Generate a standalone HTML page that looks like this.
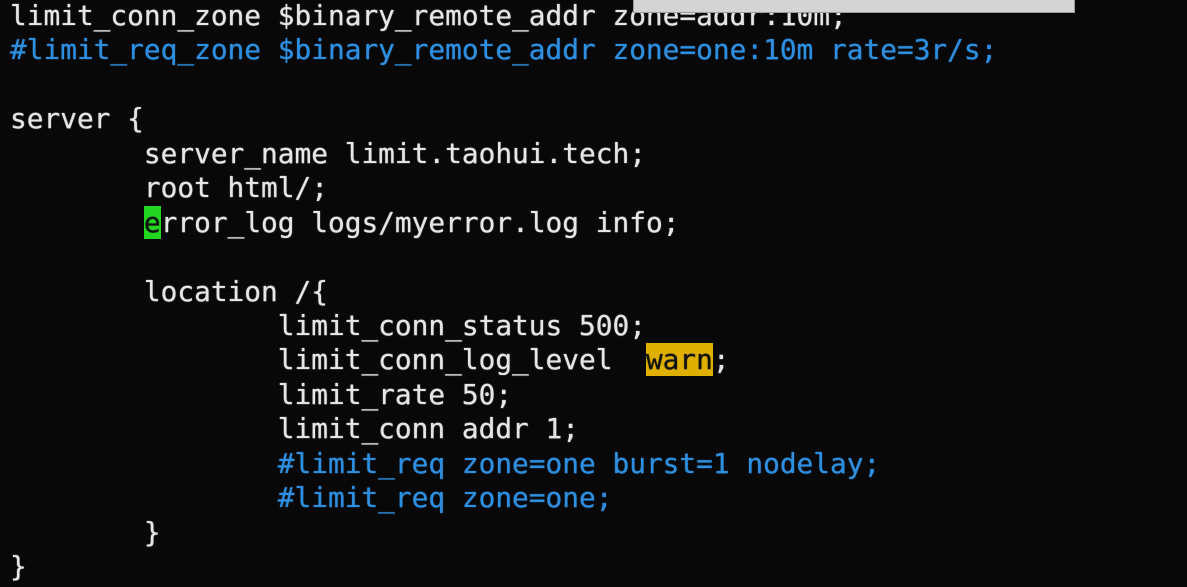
<!DOCTYPE html>
<html><head><meta charset="utf-8"><style>
html,body{margin:0;padding:0;background:#080808;width:1187px;height:587px;overflow:hidden}
pre{position:absolute;left:10px;top:-1px;margin:0;font-family:"DejaVu Sans Mono","Liberation Mono",monospace;font-size:27.8px;line-height:34.44px;color:#e6e6e6;letter-spacing:0;text-shadow:0 0 1px currentColor}
.b{color:#2e8fe0}
.g{background:#22d622;color:#111}
.y{background:#e0b000;color:#111}
.bar{position:absolute;left:633px;top:0;width:440px;height:12px;background:#d4d4d4;border:1px solid #999;border-top:none}
</style></head><body>
<pre>limit_conn_zone $binary_remote_addr zone=addr:10m;
<span class="b">#limit_req_zone $binary_remote_addr zone=one:10m rate=3r/s;</span>

server {
        server_name limit.taohui.tech;
        root html/;
        <span class="g">e</span>rror_log logs/myerror.log info;

        location /{
                limit_conn_status 500;
                limit_conn_log_level  <span class="y">warn</span>;
                limit_rate 50;
                limit_conn addr 1;
                <span class="b">#limit_req zone=one burst=1 nodelay;</span>
                <span class="b">#limit_req zone=one;</span>
        }
}</pre>
<div class="bar"></div>
</body></html>
